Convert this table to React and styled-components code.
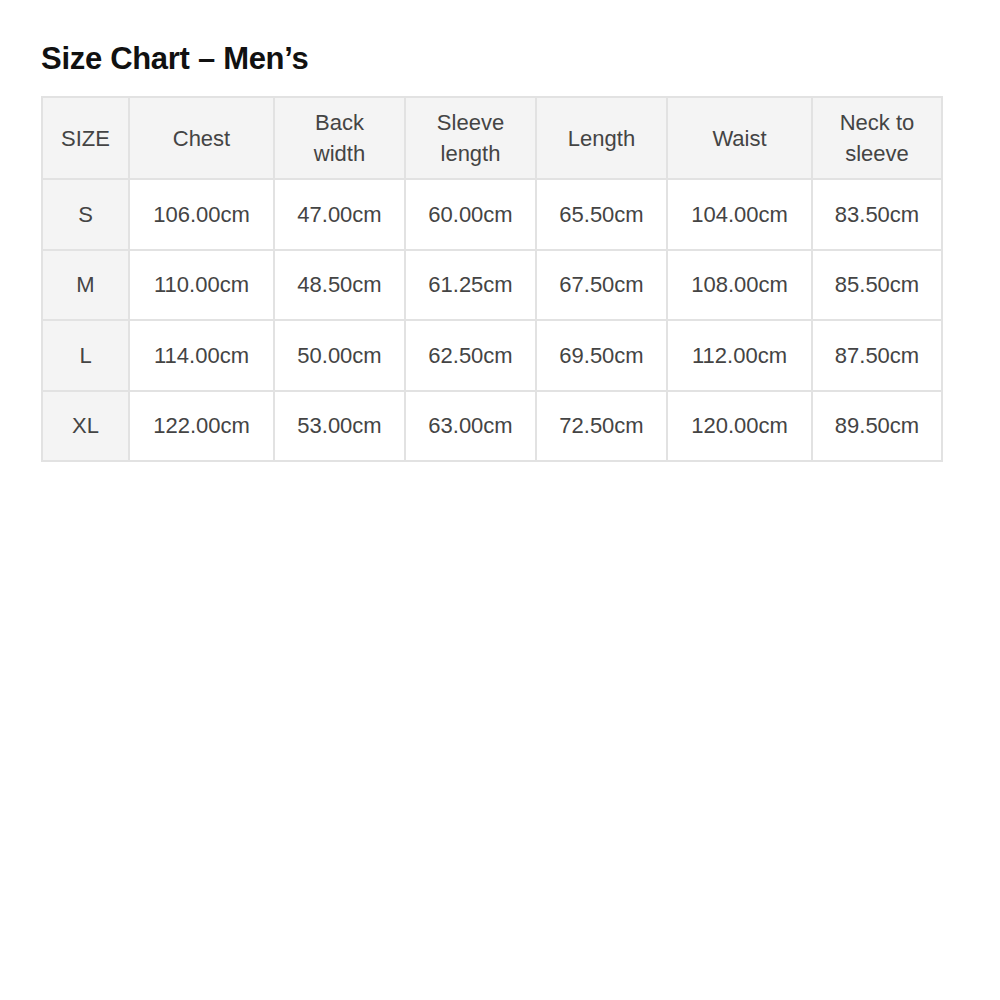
import React from "react";
import styled, { createGlobalStyle } from "styled-components";

const GlobalStyle = createGlobalStyle`
  body {
    margin: 0;
    background: #ffffff;
    font-family: "Liberation Sans", Arial, sans-serif;
  }
`;

const Page = styled.div`
  padding: 41px 0 0 41px;
`;

const Title = styled.h1`
  margin: 0 0 19px 0;
  font-size: 31px;
  letter-spacing: -0.3px;
  font-weight: bold;
  color: #111111;
  line-height: 36px;
`;

const Table = styled.table`
  border-collapse: collapse;
  table-layout: fixed;
  width: 900px;
  border: 2px solid #e2e2e2;
`;

const Cell = styled.td`
  border: 2px solid #e2e2e2;
  text-align: center;
  vertical-align: middle;
  font-size: 22px;
  font-weight: normal;
  line-height: 31px;
  color: #444444;
  padding: 0;
  height: ${(p) => (p.$head ? "80px" : "68.5px")};
  background: ${(p) => (p.$shade ? "#f4f4f4" : "#ffffff")};
`;

const HeadCell = styled(Cell).attrs({ as: "th" })``;

const widths = [87, 145, 131, 131, 131, 145, 130];

const headers = [
  "SIZE",
  "Chest",
  "Back\nwidth",
  "Sleeve\nlength",
  "Length",
  "Waist",
  "Neck to\nsleeve",
];

const rows = [
  ["S", "106.00cm", "47.00cm", "60.00cm", "65.50cm", "104.00cm", "83.50cm"],
  ["M", "110.00cm", "48.50cm", "61.25cm", "67.50cm", "108.00cm", "85.50cm"],
  ["L", "114.00cm", "50.00cm", "62.50cm", "69.50cm", "112.00cm", "87.50cm"],
  ["XL", "122.00cm", "53.00cm", "63.00cm", "72.50cm", "120.00cm", "89.50cm"],
];

const App = () => {
  return (
    <Page>
      <GlobalStyle />
      <Title>Size Chart – Men’s</Title>
      <Table>
        <colgroup>
          {widths.map((w, i) => (
            <col key={i} style={{ width: w }} />
          ))}
        </colgroup>
        <thead>
          <tr>
            {headers.map((h, i) => (
              <HeadCell key={i} $head $shade>
                {h.split("\n").map((line, j) => (
                  <div key={j}>{line}</div>
                ))}
              </HeadCell>
            ))}
          </tr>
        </thead>
        <tbody>
          {rows.map((row, r) => (
            <tr key={r}>
              {row.map((v, i) => (
                <Cell key={i} $shade={i === 0}>
                  {v}
                </Cell>
              ))}
            </tr>
          ))}
        </tbody>
      </Table>
    </Page>
  );
};

export default App;
